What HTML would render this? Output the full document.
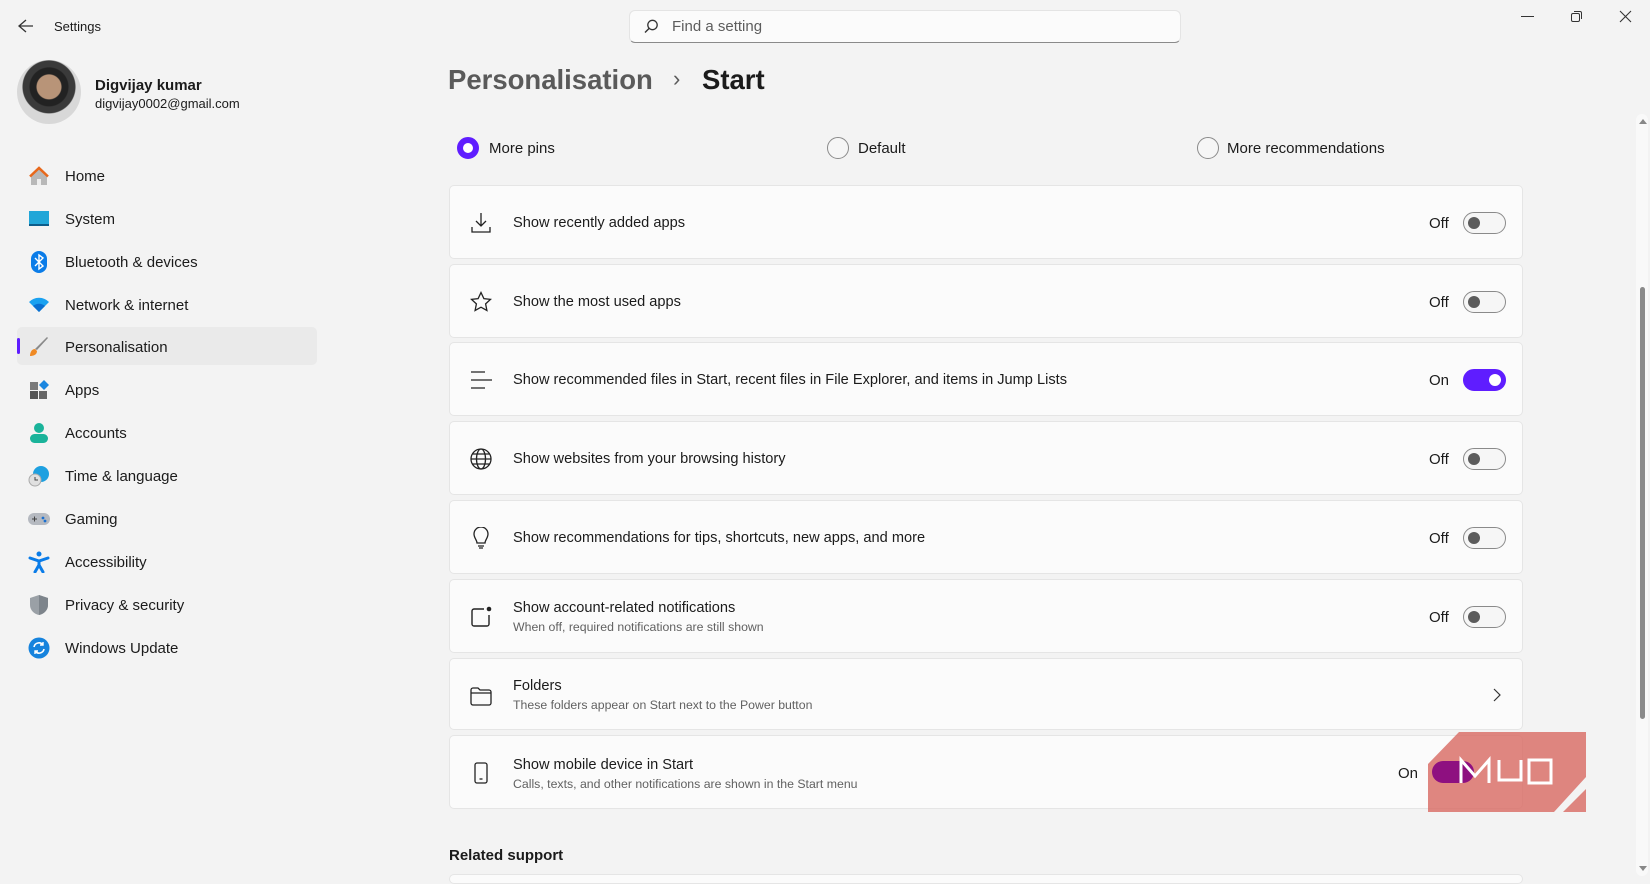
<!DOCTYPE html>
<html><head><meta charset="utf-8"><style>
*{box-sizing:border-box;margin:0;padding:0}
body{width:1650px;height:877px;overflow:hidden;background:#f3f3f3;font-family:"Liberation Sans","DejaVu Sans",sans-serif;color:#1b1b1b;position:relative}
.a{position:absolute}
.nav{position:absolute;left:17px;width:300px;height:38px;display:flex;align-items:center;font-size:15px}
.nav .ic{position:absolute;left:11px;top:8px;width:22px;height:22px}
.nav span{position:absolute;left:48px}
.card{position:absolute;left:449px;width:1074px;height:74px;background:#fbfbfb;border:1px solid #e5e5e5;border-radius:5px}
.card .t{position:absolute;left:63px;font-size:14.6px;color:#1b1b1b}
.card .s{position:absolute;left:63px;font-size:12.3px;color:#616161}
.card svg.i{position:absolute;left:20px;top:26px}
.st{position:absolute;left:979px;top:29px;font-size:15px}
.tg{position:absolute;left:1013px;top:26px;width:43px;height:22px;border-radius:11px;border:1px solid #8a8a8a;background:#f6f6f6}
.tg::after{content:"";position:absolute;left:4px;top:4px;width:12px;height:12px;border-radius:50%;background:#5c5c5c}
.tg.on{background:#5f1dff;border-color:#5f1dff}
.tg.on::after{left:25px;background:#fff}
.rad{position:absolute;top:137px;width:22px;height:22px;border-radius:50%;border:1px solid #8a8a8a;background:#f6f6f6}
</style></head><body>

<svg class="a" style="left:17px;top:18px" width="18" height="16" viewBox="0 0 18 16"><path d="M9 2L2 8l7 6M2 8h14" fill="none" stroke="#333" stroke-width="1.3"/></svg>
<div class="a" style="left:54px;top:19px;font-size:13px">Settings</div>

<div class="a" style="left:629px;top:10px;width:552px;height:33px;background:#fbfbfb;border:1px solid #e4e4e4;border-bottom:1px solid #8a8a8a;border-radius:6px"></div>
<svg class="a" style="left:644px;top:19px" width="15" height="15" viewBox="0 0 15 15"><circle cx="8.5" cy="6" r="4.7" fill="none" stroke="#333" stroke-width="1.3"/><path d="M5 9.5L1 13.5" stroke="#333" stroke-width="1.4"/></svg>
<div class="a" style="left:672px;top:18px;font-size:15px;color:#5d5d5d">Find a setting</div>

<div class="a" style="left:1521px;top:16px;width:13px;height:1px;background:#333"></div>
<svg class="a" style="left:1570px;top:10px" width="13" height="13" viewBox="0 0 13 13"><rect x="1.5" y="3.5" width="8" height="8" rx="1.5" fill="none" stroke="#333"/><path d="M4 1.5h6a1.5 1.5 0 0 1 1.5 1.5v6" fill="none" stroke="#333"/></svg>
<svg class="a" style="left:1619px;top:10px" width="13" height="13" viewBox="0 0 13 13"><path d="M1 1l11 11M12 1L1 12" stroke="#333" stroke-width="1.1"/></svg>

<div class="a" style="left:17px;top:60px;width:64px;height:64px;border-radius:50%;background:radial-gradient(circle at 50% 42%,#b89478 0 12px,#222 13px 19px,#3a3a3a 20px 26px,#d8d8d8 27px)"></div>
<div class="a" style="left:95px;top:77px;font-size:15px;font-weight:bold">Digvijay kumar</div>
<div class="a" style="left:95px;top:96px;font-size:13px">digvijay0002@gmail.com</div>

<div class="a" style="left:17px;top:327px;width:300px;height:38px;background:#eaeaea;border-radius:5px"></div>
<div class="a" style="left:17px;top:338px;width:3px;height:16px;background:#5f1dff;border-radius:2px"></div>

<div class="nav" style="top:157px"><svg class="ic" viewBox="0 0 22 22"><path d="M3 11L11 3l8 8v9H3z" fill="#b8b8b8"/><path d="M2 11.5L11 3l9 8.5" fill="none" stroke="#e8681b" stroke-width="2.5"/><rect x="9" y="14" width="4" height="6" fill="#eee"/></svg><span>Home</span></div>
<div class="nav" style="top:200px"><svg class="ic" viewBox="0 0 22 22"><rect x="1" y="3" width="20" height="15" fill="#21a6d8"/><rect x="1" y="16" width="20" height="2" fill="#0c5c8a"/></svg><span>System</span></div>
<div class="nav" style="top:243px"><svg class="ic" viewBox="0 0 22 22"><rect x="3" y="0" width="16" height="22" rx="8" fill="#0a7ce8"/><path d="M7 7l8 8-4 3V4l4 3-8 8" fill="none" stroke="#fff" stroke-width="1.4"/></svg><span>Bluetooth &amp; devices</span></div>
<div class="nav" style="top:286px"><svg class="ic" viewBox="0 0 22 22"><path d="M1 8a14 14 0 0 1 20 0L11 18z" fill="#1aa1f0"/><path d="M5 12a9 9 0 0 1 12 0L11 18z" fill="#0a6fd0"/></svg><span>Network &amp; internet</span></div>
<div class="nav" style="top:328px"><svg class="ic" viewBox="0 0 22 22"><path d="M20 2L9 14l-2-1L19 1z" fill="#8a8a8a"/><path d="M7 13c-3 0-5 3-5 7 3 0 7-1 7-5z" fill="#f08a24"/></svg><span>Personalisation</span></div>
<div class="nav" style="top:371px"><svg class="ic" viewBox="0 0 22 22"><rect x="2" y="3" width="8" height="8" fill="#7a7a7a"/><rect x="2" y="12" width="8" height="8" fill="#555"/><rect x="11" y="12" width="8" height="8" fill="#666"/><path d="M16 1l5 5-5 5-5-5z" fill="#1a86e0"/></svg><span>Apps</span></div>
<div class="nav" style="top:414px"><svg class="ic" viewBox="0 0 22 22"><circle cx="11" cy="6" r="5" fill="#1ab39a"/><rect x="2" y="12" width="18" height="9" rx="4.5" fill="#1ab39a"/></svg><span>Accounts</span></div>
<div class="nav" style="top:457px"><svg class="ic" viewBox="0 0 22 22"><circle cx="13" cy="9" r="8" fill="#1ea0e0"/><circle cx="7" cy="15" r="6" fill="#e0e0e0" stroke="#aaa"/><path d="M7 12v3h3" fill="none" stroke="#444"/></svg><span>Time &amp; language</span></div>
<div class="nav" style="top:500px"><svg class="ic" viewBox="0 0 22 22"><rect x="0" y="5" width="22" height="12" rx="6" fill="#b5b9c0"/><circle cx="15" cy="10" r="1.4" fill="#1a6fd0"/><circle cx="17" cy="13" r="1.4" fill="#1a6fd0"/><path d="M4 11h5M6.5 8.5v5" stroke="#444"/></svg><span>Gaming</span></div>
<div class="nav" style="top:543px"><svg class="ic" viewBox="0 0 22 22"><circle cx="11" cy="3" r="2.5" fill="#0a7ce8"/><path d="M2 7l9 3 9-3M11 10v4l-4 7M11 14l4 7" fill="none" stroke="#0a7ce8" stroke-width="3" stroke-linecap="round"/></svg><span>Accessibility</span></div>
<div class="nav" style="top:586px"><svg class="ic" viewBox="0 0 22 22"><path d="M11 1l9 3v7c0 5-4 9-9 10-5-1-9-5-9-10V4z" fill="#9aa0a6"/><path d="M11 1l9 3v7c0 5-4 9-9 10z" fill="#7d848b"/></svg><span>Privacy &amp; security</span></div>
<div class="nav" style="top:629px"><svg class="ic" viewBox="0 0 22 22"><circle cx="11" cy="11" r="10.5" fill="#1683dd"/><path d="M6 10a5 5 0 0 1 9-2M16 12a5 5 0 0 1-9 2" fill="none" stroke="#fff" stroke-width="1.6"/><path d="M15 5v3h-3M7 17v-3h3" fill="none" stroke="#fff" stroke-width="1.4"/></svg><span>Windows Update</span></div>

<div class="a" style="left:448px;top:64px;font-size:27.5px;font-weight:bold;color:#5a5a5a">Personalisation</div>
<div class="a" style="left:673px;top:66px;font-size:22px;color:#5a5a5a">›</div>
<div class="a" style="left:702px;top:64px;font-size:27.5px;font-weight:bold;color:#1b1b1b">Start</div>

<div class="rad" style="left:457px;border:6px solid #5f1dff;background:#fff"></div>
<div class="a" style="left:489px;top:140px;font-size:15px">More pins</div>
<div class="rad" style="left:827px"></div>
<div class="a" style="left:858px;top:140px;font-size:15px">Default</div>
<div class="rad" style="left:1197px"></div>
<div class="a" style="left:1227px;top:140px;font-size:15px">More recommendations</div>

<div class="card" style="top:185px"><svg class="i" width="22" height="22" viewBox="0 0 22 22" fill="none" stroke="#222" stroke-width="1.3"><path d="M11 1v13M6 9l5 5 5-5M2 15v5h18v-5"/></svg><div class="t" style="top:29px">Show recently added apps</div><div class="st">Off</div><div class="tg"></div></div>
<div class="card" style="top:264px"><svg class="i" width="22" height="22" viewBox="0 0 22 22" fill="none" stroke="#222" stroke-width="1.3"><path d="M11 1.5l2.9 6.1 6.6.8-4.9 4.5 1.3 6.6L11 16.2l-5.9 3.3 1.3-6.6L1.5 8.4l6.6-.8z"/></svg><div class="t" style="top:29px">Show the most used apps</div><div class="st">Off</div><div class="tg"></div></div>
<div class="card" style="top:342px"><svg class="i" width="22" height="22" viewBox="0 0 22 22" fill="none" stroke="#222" stroke-width="1.3"><path d="M1 3h14M1 11h22M1 19h14"/></svg><div class="t" style="top:29px">Show recommended files in Start, recent files in File Explorer, and items in Jump Lists</div><div class="st">On</div><div class="tg on"></div></div>
<div class="card" style="top:421px"><svg class="i" width="22" height="22" viewBox="0 0 22 22" fill="none" stroke="#222" stroke-width="1.3"><circle cx="11" cy="11" r="10"/><ellipse cx="11" cy="11" rx="4.5" ry="10"/><path d="M1 11h20M2.5 6h17M2.5 16h17"/></svg><div class="t" style="top:29px">Show websites from your browsing history</div><div class="st">Off</div><div class="tg"></div></div>
<div class="card" style="top:500px"><svg class="i" width="22" height="22" viewBox="0 0 22 22" fill="none" stroke="#222" stroke-width="1.3"><path d="M7 16c0-3-3-5-3-9a7 7 0 0 1 14 0c0 4-3 6-3 9zM8 19h6M9 21h4"/></svg><div class="t" style="top:29px">Show recommendations for tips, shortcuts, new apps, and more</div><div class="st">Off</div><div class="tg"></div></div>
<div class="card" style="top:579px"><svg class="i" width="22" height="22" viewBox="0 0 22 22" fill="none" stroke="#222" stroke-width="1.4"><path d="M14 3H4a2 2 0 0 0-2 2v13a2 2 0 0 0 2 2h13a2 2 0 0 0 2-2V9"/><circle cx="19" cy="3" r="2.3" fill="#222" stroke="none"/></svg><div class="t" style="top:20px">Show account-related notifications</div><div class="s" style="top:40px">When off, required notifications are still shown</div><div class="st">Off</div><div class="tg"></div></div>
<div class="card" style="top:658px;height:72px"><svg class="i" width="22" height="22" viewBox="0 0 22 22" fill="none" stroke="#222" stroke-width="1.3"><path d="M1 5a2 2 0 0 1 2-2h5l2 2h9a2 2 0 0 1 2 2v11a2 2 0 0 1-2 2H3a2 2 0 0 1-2-2z M1 8h20"/></svg><div class="t" style="top:19px">Folders</div><div class="s" style="top:39px">These folders appear on Start next to the Power button</div><svg class="a" style="left:1042px;top:29px" width="9" height="14" viewBox="0 0 9 14"><path d="M2 1l6 6-6 6" fill="none" stroke="#333" stroke-width="1.2"/></svg></div>
<div class="card" style="top:735px"><svg class="i" width="22" height="22" viewBox="0 0 22 22" fill="none" stroke="#222" stroke-width="1.3"><rect x="5" y="1" width="12" height="20" rx="2"/><path d="M9.5 17h3"/></svg><div class="t" style="top:21px">Show mobile device in Start</div><div class="s" style="top:41px">Calls, texts, and other notifications are shown in the Start menu</div><div class="st" style="left:948px">On</div></div>

<svg class="a" style="left:1427px;top:732px" width="160" height="82" viewBox="0 0 160 82"><path d="M32 0H159V45L127 80H1V32z" fill="#d9716a" opacity=".85"/><path d="M159 57V80H136z" fill="#d9716a" opacity=".85"/><rect x="5" y="29" width="42" height="22" rx="11" fill="#8e1080"/><path d="M34 51V28l14 16 14-16v23M72 28v20h22V28M102 28h22v23h-22z" fill="none" stroke="#fff" stroke-width="3"/></svg>

<div class="a" style="left:449px;top:847px;font-size:15px;font-weight:bold">Related support</div>
<div class="a" style="left:449px;top:874px;width:1074px;height:10px;background:#fbfbfb;border:1px solid #e5e5e5;border-radius:5px"></div>

<div class="a" style="left:1636px;top:114px;width:12px;height:762px;background:#f9f9f9;border-radius:6px"></div>
<div class="a" style="left:1639px;top:119px;width:0;height:0;border-left:4px solid transparent;border-right:4px solid transparent;border-bottom:5px solid #888"></div>
<div class="a" style="left:1639px;top:866px;width:0;height:0;border-left:4px solid transparent;border-right:4px solid transparent;border-top:5px solid #888"></div>
<div class="a" style="left:1640px;top:287px;width:5px;height:432px;background:#8a8a8a;border-radius:3px"></div>
</body></html>
